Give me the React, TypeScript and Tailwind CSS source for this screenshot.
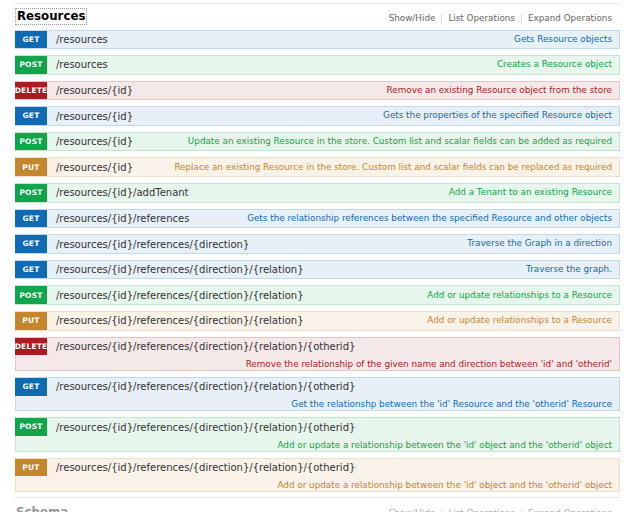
import React from "react";

type Method = "GET" | "POST" | "DELETE" | "PUT";

const styles: Record<Method, { row: string; badge: string; desc: string }> = {
  GET: { row: "bg-[#e7f0f7] border-[#c3d9ec]", badge: "bg-[#0f6ab4]", desc: "text-[#0f6ab4]" },
  POST: { row: "bg-[#e7f6ec] border-[#c3e8d1]", badge: "bg-[#10a54a]", desc: "text-[#10a54a]" },
  DELETE: { row: "bg-[#f5e8e8] border-[#e8c6c7]", badge: "bg-[#a41e22]", desc: "text-[#a41e22]" },
  PUT: { row: "bg-[#f9f2e9] border-[#f0e0ca]", badge: "bg-[#c5862b]", desc: "text-[#c5862b]" },
};

const ops: { m: Method; path: string; desc: string; two?: boolean }[] = [
  { m: "GET", path: "/resources", desc: "Gets Resource objects" },
  { m: "POST", path: "/resources", desc: "Creates a Resource object" },
  { m: "DELETE", path: "/resources/{id}", desc: "Remove an existing Resource object from the store" },
  { m: "GET", path: "/resources/{id}", desc: "Gets the properties of the specified Resource object" },
  { m: "POST", path: "/resources/{id}", desc: "Update an existing Resource in the store. Custom list and scalar fields can be added as required" },
  { m: "PUT", path: "/resources/{id}", desc: "Replace an existing Resource in the store. Custom list and scalar fields can be replaced as required" },
  { m: "POST", path: "/resources/{id}/addTenant", desc: "Add a Tenant to an existing Resource" },
  { m: "GET", path: "/resources/{id}/references", desc: "Gets the relationship references between the specified Resource and other objects" },
  { m: "GET", path: "/resources/{id}/references/{direction}", desc: "Traverse the Graph in a direction" },
  { m: "GET", path: "/resources/{id}/references/{direction}/{relation}", desc: "Traverse the graph." },
  { m: "POST", path: "/resources/{id}/references/{direction}/{relation}", desc: "Add or update relationships to a Resource" },
  { m: "PUT", path: "/resources/{id}/references/{direction}/{relation}", desc: "Add or update relationships to a Resource" },
  { m: "DELETE", path: "/resources/{id}/references/{direction}/{relation}/{otherid}", desc: "Remove the relationship of the given name and direction between 'id' and 'otherid'", two: true },
  { m: "GET", path: "/resources/{id}/references/{direction}/{relation}/{otherid}", desc: "Get the relationshp between the 'id' Resource and the 'otherid' Resource", two: true },
  { m: "POST", path: "/resources/{id}/references/{direction}/{relation}/{otherid}", desc: "Add or update a relationship between the 'id' object and the 'otherid' object", two: true },
  { m: "PUT", path: "/resources/{id}/references/{direction}/{relation}/{otherid}", desc: "Add or update a relationship between the 'id' object and the 'otherid' object", two: true },
];

function Options({ faded }: { faded?: boolean }) {
  const c = faded ? "text-[#b0b0b0]" : "text-[#666]";
  return (
    <div className={`flex items-center text-[8.8px] pt-[4px] ${c}`}>
      <span>Show/Hide</span>
      <span className="mx-[6px] h-[12px] border-l border-[#ddd]" />
      <span>List Operations</span>
      <span className="mx-[6px] h-[12px] border-l border-[#ddd]" />
      <span>Expand Operations</span>
    </div>
  );
}

export default function App() {
  return (
    <div
      className="w-[640px] h-[512px] overflow-hidden bg-white"
      style={{ fontFamily: '"DejaVu Sans", sans-serif' }}
    >
      <div className="ml-[15px] w-[605px] pt-[3px]">
        <div className="border-t border-[#e5e5e5] h-[26.5px] flex items-center justify-between pr-[8px]">
          <h2 className="text-[11.8px] font-bold text-black outline outline-1 outline-dotted outline-[#999] leading-[15px] px-px ml-px">
            Resources
          </h2>
          <Options />
        </div>
        <ul className="flex flex-col gap-[6px]">
          {ops.map((o, i) => {
            const s = styles[o.m];
            return (
              <li
                key={i}
                className={`border ${s.row} flex ${o.two ? "h-[34.3px]" : "h-[19.6px]"}`}
              >
                <div
                  className={`${s.badge} -ml-px w-[32px] h-[17.6px] shrink-0 flex items-center justify-center text-white font-bold text-[7.5px] tracking-[0.2px]`}
                >
                  {o.m}
                </div>
                {o.two ? (
                  <div className="flex-1 flex flex-col pl-[9px] pr-[7px]">
                    <div className="h-[17.6px] flex items-center text-[10px] text-[#333]">{o.path}</div>
                    <div className={`h-[14.7px] flex items-end justify-end pb-[1px] leading-none text-[8.8px] ${s.desc}`}>{o.desc}</div>
                  </div>
                ) : (
                  <div className="flex-1 flex items-center justify-between pl-[9px] pr-[7px]">
                    <span className="text-[10px] text-[#333] whitespace-nowrap">{o.path}</span>
                    <span className={`text-[8.8px] whitespace-nowrap ${s.desc}`}>{o.desc}</span>
                  </div>
                )}
              </li>
            );
          })}
        </ul>
        <div className="mt-[5px] border-t border-[#e5e5e5] h-[26.5px] flex items-center justify-between pr-[8px] pt-[3px]">
          <h2 className="text-[11.8px] font-bold text-[#999] leading-[15px] ml-px">Schema</h2>
          <Options faded />
        </div>
      </div>
    </div>
  );
}
